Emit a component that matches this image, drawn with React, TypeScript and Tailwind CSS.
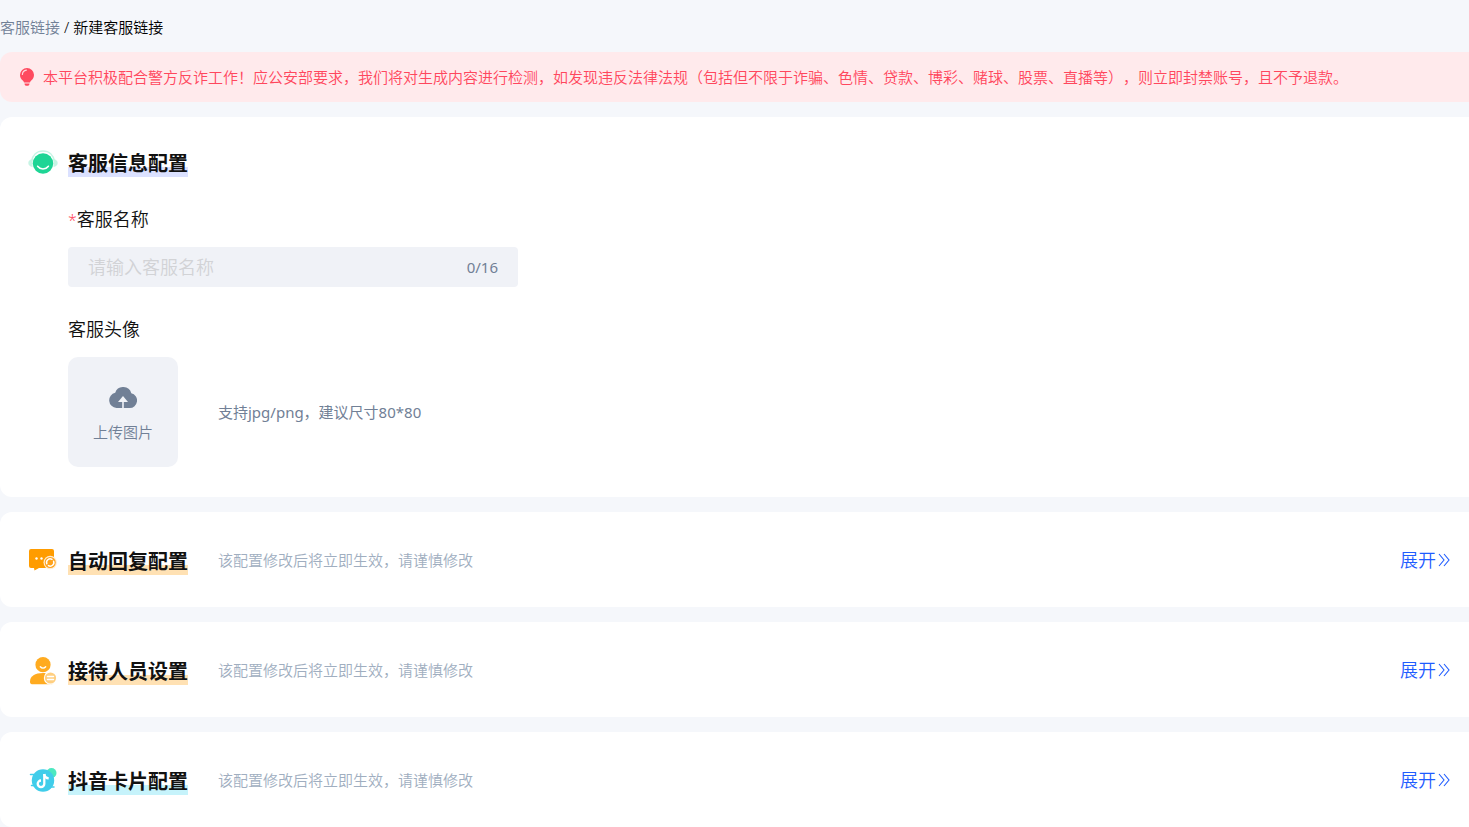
import { useState } from "react"
import type { ReactNode } from "react"

const MAX_NOMBRE = 16

function BulbIcon() {
  return (
    <svg width="14" height="18" viewBox="0 0 14 18" fill="none" aria-hidden="true">
      <path d="M7 0a7 7 0 0 0-7 6.800c0 2.400 1 4.200 2.500 5.500.8.7 1.300 1.400 1.500 2.200h6c.2-.8.7-1.500 1.500-2.200C13 11 14 9.200 14 6.800A7 7 0 0 0 7 0Z" fill="#ff4a5f" />
      <path d="M4.500 15.500h5c0 1.500-.8 2.300-2.500 2.300s-2.500-.8-2.500-2.300Z" fill="#ff4a5f" />
      <path d="M2.400 6.500A4.600 4.600 0 0 1 6.400 2.200" stroke="#ffd5da" strokeWidth="1.200" strokeLinecap="round" />
    </svg>
  )
}

function ServiceIcon() {
  return (
    <svg width="30" height="28" viewBox="0 0 30 28" fill="none" aria-hidden="true">
      <path d="M3.500 12.500C4.500 6 9 2 15 2s10.500 4 11.500 10.500" stroke="#c6f4e4" strokeWidth="1.600" />
      <path d="M4.500 10v8C1.800 17.500.3 16 .3 14s1.500-3.500 4.200-4ZM25.500 10v8c2.700-.5 4.200-2 4.200-4s-1.500-3.500-4.200-4Z" fill="#c6f4e4" />
      <circle cx="15" cy="14.500" r="10.200" fill="#1ed595" />
      <path d="M9.600 17.200c2.800 3.700 8 3.700 10.800 0" stroke="#fff" strokeWidth="1.500" strokeLinecap="round" />
    </svg>
  )
}

function ReplyIcon() {
  return (
    <svg width="30" height="28" viewBox="0 0 30 28" fill="none" aria-hidden="true">
      <path d="M3 2h21a2 2 0 0 1 2 2v15a2 2 0 0 1-2 2H11l-4.500 2.400L6 21H3a2 2 0 0 1-2-2V4a2 2 0 0 1 2-2Z" fill="#ff9c00" />
      <circle cx="8.500" cy="11.500" r="1.200" fill="#fff" />
      <circle cx="13.500" cy="11.500" r="1.200" fill="#fff" />
      <circle cx="22.200" cy="15.500" r="6.700" fill="#ffecd0" />
      <circle cx="22.200" cy="15.500" r="5.500" fill="#ffa21a" />
      <path d="M18.800 16.800a3.600 3.600 0 0 1 5.200-4.400M25.600 14.200a3.600 3.600 0 0 1-5.200 4.400" stroke="#fff" strokeWidth="1.500" strokeLinecap="round" />
    </svg>
  )
}

function StaffIcon() {
  return (
    <svg width="30" height="28" viewBox="0 0 30 28" fill="none" aria-hidden="true">
      <path d="M2 24.500C2 19 7 16 15 16c6 0 10 2 11.500 6 .8 3-1 5.300-3.500 5.300H5c-2 0-3-.8-3-2.300Z" fill="#ffab20" />
      <circle cx="15" cy="7.700" r="8.300" fill="#fff" />
      <circle cx="15" cy="7.700" r="7.600" fill="#ffab20" />
      <path d="M12.300 9.800c1.600 1.800 3.800 1.800 5.400 0" stroke="#fff" strokeWidth="1.300" strokeLinecap="round" />
      <circle cx="22.500" cy="21" r="6.700" fill="#fff" />
      <circle cx="22.500" cy="21" r="5.600" fill="#ffcf80" />
      <path d="M19.500 19.500h6M19.500 22.500h6" stroke="#fff" strokeWidth="1.400" strokeLinecap="round" />
    </svg>
  )
}

function DouyinIcon() {
  return (
    <svg width="30" height="28" viewBox="0 0 30 28" fill="none" aria-hidden="true">
      <circle cx="23.500" cy="6" r="5" fill="#4de8c0" />
      <circle cx="15" cy="13.500" r="11.200" fill="#40cdea" />
      <path d="M2.500 7.500H7M3.500 18.500H7M22 20h4" stroke="#40cdea" strokeWidth="1.500" strokeLinecap="round" />
      <path d="M16.300 7v9.800a3.300 3.300 0 1 1-3.300-3.300" stroke="#fff" strokeWidth="2.300" />
      <path d="M16.300 7c.3 2.600 1.800 4.200 4.400 4.400" stroke="#fff" strokeWidth="2.300" />
    </svg>
  )
}

function CloudIcon() {
  return (
    <svg width="28" height="21" viewBox="0 0 28 21" aria-hidden="true">
      <path d="M22.300 6.200A8.400 8.400 0 0 0 6.200 5.800 7.700 7.700 0 0 0 7.500 21h5.700V15H9l5-6 5 6h-4.200v6h5.700a7.500 7.500 0 0 0 1.800-14.800Z" fill="#718096" />
    </svg>
  )
}

function DoubleArrowIcon() {
  return (
    <svg width="12" height="14" viewBox="0 0 12 14" fill="none" stroke="currentColor" strokeWidth="1.100" aria-hidden="true">
      <path d="M1 1l5 6-5 6M6 1l5 6-5 6" />
    </svg>
  )
}

interface TituloProps {
  icon: ReactNode
  texto: string
  marca: string
}

function Titulo({ icon, texto, marca }: TituloProps) {
  return (
    <div className="flex items-center gap-[10px]">
      {icon}
      <h2 className={`pt-[2px] text-[20px] leading-[26px] font-bold text-[#111111] ${marca}`}>{texto}</h2>
    </div>
  )
}

function SeccionPlegable({ icon, texto, marca }: TituloProps) {
  const [abierto, setAbierto] = useState(false)

  return (
    <section className="flex items-start rounded-l-xl bg-white pt-[35px] pr-[19px] pb-8 pl-7">
      <Titulo icon={icon} texto={texto} marca={marca} />
      <p className="ml-[30px] flex-1 text-[15px] leading-[26px] text-[#a0aec0]">该配置修改后将立即生效，请谨慎修改</p>
      <button
        type="button"
        aria-expanded={abierto}
        onClick={() => setAbierto(!abierto)}
        className="flex items-center gap-[2px] text-[18px] leading-[26px] text-[#1f5cff]"
      >
        {abierto ? "收起" : "展开"}
        <DoubleArrowIcon />
      </button>
    </section>
  )
}

export default function App() {
  const [nombre, setNombre] = useState("")

  return (
    <div className="min-h-screen overflow-x-hidden bg-[#f5f7fb] font-['Noto_Sans','Noto_Sans_CJK_SC',sans-serif] font-[350] [text-spacing-trim:space-all]">
      <nav className="flex h-[52px] items-center gap-1 pt-[2px] text-[15px] leading-6 text-black">
        <a href="#" className="text-[#718096]">客服链接</a>
        <span>/</span>
        <span>新建客服链接</span>
      </nav>

      <main className="space-y-[15px]">
        <div className="flex h-[50px] items-center gap-[9px] rounded-l-xl bg-[#ffeaec] pl-5 text-[15px] whitespace-nowrap text-[#ff475d]">
          <BulbIcon />
          <p>
            本平台积极配合警方反诈工作！应公安部要求，我们将对生成内容进行检测，如发现违反法律法规（包括但不限于诈骗、色情、贷款、博彩、赌球、股票、直播等），则立即封禁账号，且不予退款。
          </p>
        </div>

        {/* 客服信息 */}
        <section className="rounded-l-xl bg-white pt-8 pb-[30px] pl-7">
          <Titulo
            icon={<ServiceIcon />}
            texto="客服信息配置"
            marca="bg-[linear-gradient(to_top,#dbe1ff_10px,transparent_10px)]"
          />
          <div className="pl-10 text-[#111111]">
            <label htmlFor="nombre" className="mt-7 mb-[14px] block text-[18px] leading-7">
              <span className="text-[16px] leading-none text-[#ff475d]">*</span>客服名称
            </label>
            <div className="flex h-10 w-[450px] items-center rounded bg-[#f0f2f7] px-5">
              <input
                id="nombre"
                type="text"
                maxLength={MAX_NOMBRE}
                value={nombre}
                onChange={(e) => setNombre(e.target.value)}
                placeholder="请输入客服名称"
                className="min-w-0 flex-1 bg-transparent text-[18px] outline-none placeholder:text-[#d2d3d6]"
              />
              <span className="text-[15px] font-normal text-[#718096]">{nombre.length}/{MAX_NOMBRE}</span>
            </div>

            <p className="mt-7 mb-[14px] text-[18px] leading-7">客服头像</p>
            <div className="flex items-center gap-10 text-[15px] text-[#718096]">
              <label className="flex size-[110px] cursor-pointer flex-col items-center justify-center gap-3 rounded-[10px] bg-[#f0f2f7] pt-[6px]">
                <CloudIcon />
                <span className="leading-6">上传图片</span>
                <input type="file" accept=".jpg,.png" className="hidden" />
              </label>
              <p className="font-normal">支持jpg/png，建议尺寸80*80</p>
            </div>
          </div>
        </section>

        <SeccionPlegable
          icon={<ReplyIcon />}
          texto="自动回复配置"
          marca="bg-[linear-gradient(to_top,#ffe1b3_10px,transparent_10px)]"
        />
        <SeccionPlegable
          icon={<StaffIcon />}
          texto="接待人员设置"
          marca="bg-[linear-gradient(to_top,#ffe1b3_10px,transparent_10px)]"
        />
        <SeccionPlegable
          icon={<DouyinIcon />}
          texto="抖音卡片配置"
          marca="bg-[linear-gradient(to_top,#c6f3fb_10px,transparent_10px)]"
        />
      </main>
    </div>
  )
}
